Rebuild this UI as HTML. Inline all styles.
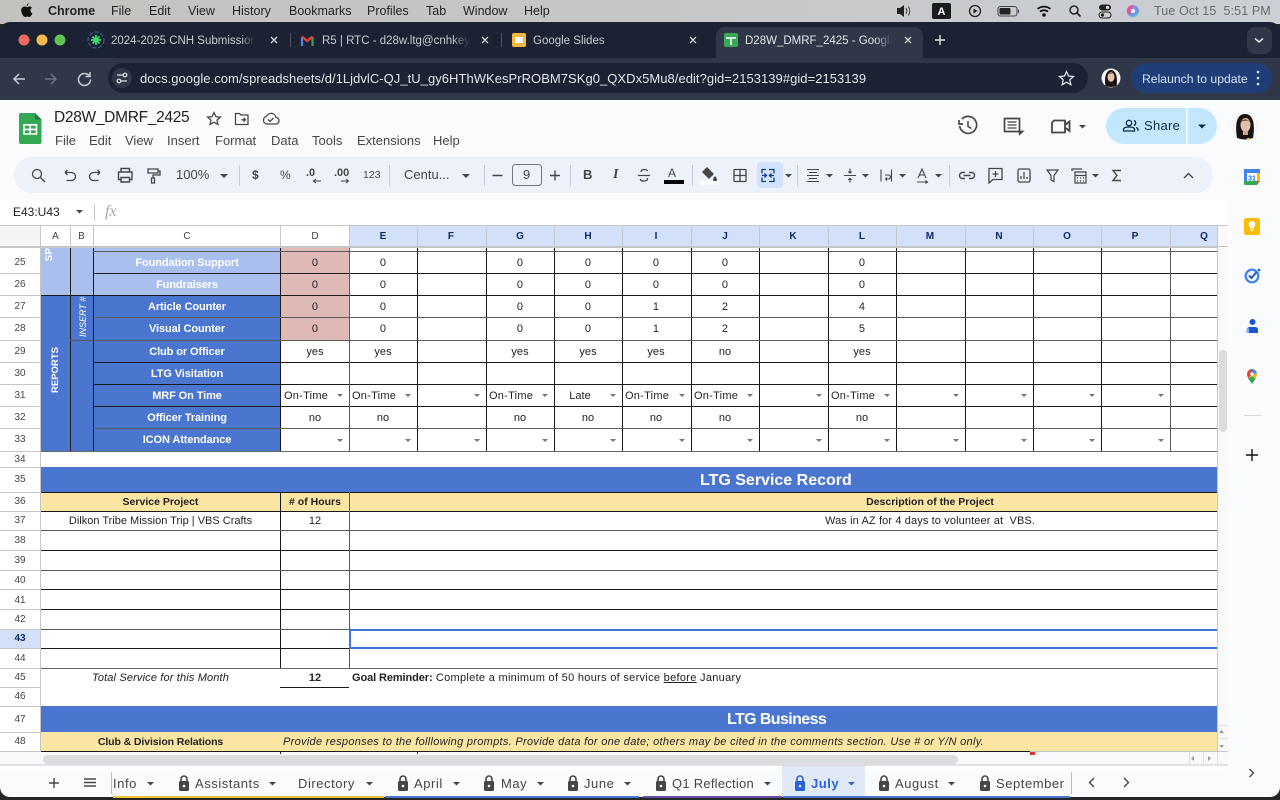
<!DOCTYPE html>
<html><head><meta charset="utf-8"><title>D28W_DMRF_2425</title>
<style>
*{box-sizing:border-box}
html,body{margin:0;padding:0;width:1280px;height:800px;overflow:hidden;background:#262626;font-family:"Liberation Sans",sans-serif}
.x,.c,.b,.h{position:absolute;white-space:nowrap;font-style:normal}
.b{display:block}
.x{line-height:16px}
.m{top:3px;font-size:12.5px;color:#222}
.tt{top:33px;font-size:11.5px;color:#c7cad1;overflow:hidden}
.mn{top:133px;font-size:13px;color:#444746}
.tb{top:167px;font-size:13px;color:#444746}
.st{top:776px;font-size:13px;letter-spacing:.55px;color:#444746}
.c{font-size:11px;color:#222;text-align:center;letter-spacing:.05px;margin-top:1px}
.w{color:#fff;font-weight:bold;letter-spacing:-.1px}
.hd{font-size:10.5px;font-weight:bold;letter-spacing:0}
.cC{left:94px;width:186px}.cD{left:281px;width:68px}.cE{left:349px;width:68px}.cF{left:417px;width:68px}.cG{left:486px;width:68px}.cH{left:554px;width:68px}.cI{left:622px;width:68px}.cJ{left:691px;width:68px}.cK{left:759px;width:68px}.cL{left:828px;width:68px}
.r25{top:251px;height:22px;line-height:22px}.r26{top:273px;height:22px;line-height:22px}.r27{top:295px;height:22px;line-height:22px}.r28{top:317px;height:23px;line-height:23px}.r29{top:340px;height:22px;line-height:22px}.r30{top:362px;height:22px;line-height:22px}.r31{top:384px;height:22px;line-height:22px}.r32{top:406px;height:22px;line-height:22px}.r33{top:428px;height:23px;line-height:23px}
.on{text-align:left;padding-left:3px;letter-spacing:.25px}
.h{left:0;width:40px;text-align:center;font-size:10px;color:#444;height:16px;line-height:16px;margin-top:1px}
.k{top:228px;height:16px;line-height:16px;font-size:10px;text-align:center;color:#0b2a66;font-weight:bold}
.k2{color:#444;font-weight:normal}
.v{position:absolute;writing-mode:vertical-rl;transform:rotate(180deg);white-space:nowrap;color:#fff;line-height:14px}
</style></head><body>
<!-- menu bar -->
<div class="b" style="left:0;top:0;width:1280px;height:24px;background:linear-gradient(90deg,#c4c2bf 0%,#c6c6c6 50%,#cbd0d6 100%)"></div>
<span class="x m" style="left:48px;font-weight:bold">Chrome</span>
<span class="x m" style="left:111px">File</span><span class="x m" style="left:149px">Edit</span><span class="x m" style="left:188px">View</span><span class="x m" style="left:232px">History</span><span class="x m" style="left:289px">Bookmarks</span><span class="x m" style="left:367px">Profiles</span><span class="x m" style="left:426px">Tab</span><span class="x m" style="left:463px">Window</span><span class="x m" style="left:524px">Help</span>
<span class="x m" style="left:1154px;color:#68696c;letter-spacing:.1px">Tue Oct 15&nbsp; 5:51 PM</span>
<!-- window -->
<div class="b" style="left:0;top:22px;width:1280px;height:775px;border-radius:10px 10px 10px 10px;background:#1b2234;overflow:hidden">
<div class="b" style="left:0;top:36px;width:1280px;height:42px;background:#2f3748"></div>
<div class="b" style="left:716px;top:5px;width:207px;height:32px;background:#2f3748;border-radius:9px 9px 0 0"></div>
<div class="b" style="left:1247px;top:5px;width:25px;height:27px;background:#2f3748;border-radius:8px"></div>
<div class="b" style="left:108px;top:41px;width:980px;height:30px;background:#1b2234;border-radius:15px"></div>
<div class="b" style="left:1131px;top:41px;width:141px;height:30px;background:#1f3e78;border-radius:15px"></div>
<div class="b" style="left:0;top:78px;width:1280px;height:697px;background:#f9fbfd"></div>
<div class="b" style="left:14px;top:135px;width:1199px;height:36px;background:#edf2fa;border-radius:18px"></div>
<div class="b" style="left:0;top:178px;width:1228px;height:570px;background:#fff"></div>
<div class="b" style="left:1106px;top:86px;width:111px;height:36px;background:#c2e7ff;border-radius:18px"></div>
<div class="b" style="left:757px;top:140px;width:26px;height:26px;background:#d3e3fd;border-radius:4px"></div>
</div>
<!-- tabs text -->
<span class="x tt" style="left:111px;width:144px;-webkit-mask-image:linear-gradient(90deg,#000 90%,transparent)">2024-2025 CNH Submission Portal</span>
<span class="x tt" style="left:322px;width:148px;-webkit-mask-image:linear-gradient(90deg,#000 88%,transparent)">R5 | RTC - d28w.ltg@cnhkeyclub.org</span>
<span class="x tt" style="left:533px;width:90px">Google Slides</span>
<span class="x tt" style="left:745px;width:147px;color:#e3e5ea;-webkit-mask-image:linear-gradient(90deg,#000 88%,transparent)">D28W_DMRF_2425 - Google Sheets</span>
<span class="x" style="left:140px;top:71px;font-size:13px;letter-spacing:.04px;color:#e3e5ea">docs.google.com/spreadsheets/d/1LjdvlC-QJ_tU_gy6HThWKesPrROBM7SKg0_QXDx5Mu8/edit?gid=2153139#gid=2153139</span>
<span class="x" style="left:1142px;top:71px;font-size:12.2px;color:#d5e3fb">Relaunch to update</span>
<!-- docs header -->
<span class="x" style="left:54px;top:109px;font-size:15.5px;line-height:18px;letter-spacing:-.3px;color:#1f1f1f">D28W_DMRF_2425</span>
<span class="x mn" style="left:55px">File</span><span class="x mn" style="left:89px">Edit</span><span class="x mn" style="left:125px">View</span><span class="x mn" style="left:167px">Insert</span><span class="x mn" style="left:215px">Format</span><span class="x mn" style="left:271px">Data</span><span class="x mn" style="left:312px">Tools</span><span class="x mn" style="left:357px">Extensions</span><span class="x mn" style="left:433px">Help</span>
<span class="x" style="left:1144px;top:118px;font-size:13px;letter-spacing:.3px;color:#0b2a4a">Share</span>
<span class="x tb" style="left:176px">100%</span>
<span class="x tb" style="left:252px;font-weight:bold;font-size:12px">$</span><span class="x tb" style="left:280px;font-size:12px">%</span>
<span class="x tb" style="left:306px;top:165px;font-size:11px;font-weight:bold">.0</span><span class="x tb" style="left:334px;top:165px;font-size:11px;font-weight:bold">.00</span>
<span class="x tb" style="left:363px;font-size:10.5px">123</span>
<span class="x tb" style="left:404px">Centu...</span>
<span class="x tb" style="left:523px">9</span>
<span class="x tb" style="left:583px;font-weight:bold;font-size:13px">B</span>
<span class="x tb" style="left:613px;font-style:italic;font-size:14px;font-family:'Liberation Serif',serif;font-weight:bold">I</span>
<span class="x tb" style="left:668px;top:165px;font-size:12px">A</span>
<span class="x" style="left:13px;top:204px;font-size:12px;color:#1f1f1f">E43:U43</span>
<span class="x" style="left:105px;top:204px;font-size:16px;font-style:italic;font-family:'Liberation Serif',serif;color:#a6a8ab">fx</span>
<!-- fills -->
<div class="b" style="left:41px;top:247px;width:52px;height:48px;background:#a9c0ee"></div>
<div class="b" style="left:93px;top:247px;width:188px;height:48px;background:#a9c0ee"></div>
<div class="b" style="left:41px;top:295px;width:240px;height:156px;background:#4a76cf"></div>
<div class="b" style="left:281px;top:247px;width:68px;height:93px;background:#deb9b6"></div>
<div class="b" style="left:41px;top:467px;width:1176px;height:25px;background:#4a76cf"></div>
<div class="b" style="left:41px;top:492px;width:1176px;height:19px;background:#fbe5a3"></div>
<div class="b" style="left:41px;top:706px;width:1176px;height:26px;background:#4a76cf"></div>
<div class="b" style="left:41px;top:732px;width:1176px;height:20px;background:#fbe5a3"></div>
<div class="b" style="left:349px;top:226px;width:868px;height:20px;background:#d3e0f9"></div>
<div class="b" style="left:0;top:226px;width:40px;height:20px;background:#f3f4f5"></div>
<div class="b" style="left:0;top:629px;width:40px;height:19px;background:#d3e0f9"></div>
<div class="b" style="left:1217px;top:226px;width:11px;height:526px;background:#fafafa"></div>
<div class="b" style="left:0;top:752px;width:1228px;height:13px;background:#f8f9fa"></div>
<div class="b" style="left:1219px;top:350px;width:8px;height:82px;background:#dadce0;border-radius:4px"></div>
<div class="b" style="left:43px;top:755px;width:915px;height:9px;background:#dadce0;border-radius:5px"></div>
<div class="b" style="left:782px;top:765px;width:83px;height:32px;background:#e1e9f7"></div>
<div class="b" style="left:113px;top:796px;width:271px;height:2px;background:#f1c232"></div>
<div class="b" style="left:385px;top:796px;width:254px;height:2px;background:#4a76cf"></div>
<div class="b" style="left:643px;top:796px;width:139px;height:2px;background:#674ea7"></div>
<div class="b" style="left:783px;top:796px;width:287px;height:2px;background:#4a76cf"></div>
<!-- grid lines and icons -->
<svg width="1280" height="800" viewBox="0 0 1280 800" style="position:absolute;left:0;top:0">
<defs>
<symbol id="lk" viewBox="0 0 12 18"><path d="M3 7V5a3 3 0 0 1 6 0v2" fill="none" stroke="#444746" stroke-width="1.6"/><rect x="1" y="7" width="10" height="10" rx="1.5" fill="#444746"/><circle cx="6" cy="12" r="1.3" fill="#f9fbfd"/></symbol>
<symbol id="lb" viewBox="0 0 12 18"><path d="M3 7V5a3 3 0 0 1 6 0v2" fill="none" stroke="#2a62d8" stroke-width="1.6"/><rect x="1" y="7" width="10" height="10" rx="1.5" fill="#2a62d8"/><circle cx="6" cy="12" r="1.3" fill="#e1e9f7"/></symbol>
</defs>
<g shape-rendering="crispEdges" fill="none">
<path stroke="#c4c7c5" d="M0 225.5H1228M0 246.5H1228M40.5 226V752M70.5 226V246M93.5 226V246M280.5 226V246M349.5 226V246M417.5 226V246M486.5 226V246M554.5 226V246M622.5 226V246M691.5 226V246M759.5 226V246M828.5 226V246M896.5 226V246M965.5 226V246M1033.5 226V246M1101.5 226V246M1170.5 226V246M0 273.5H40M0 295.5H40M0 317.5H40M0 340.5H40M0 362.5H40M0 384.5H40M0 406.5H40M0 428.5H40M0 451.5H40M0 467.5H40M0 492.5H40M0 511.5H40M0 530.5H40M0 550.5H40M0 570.5H40M0 589.5H40M0 609.5H40M0 629.5H40M0 648.5H40M0 668.5H40M0 687.5H40M0 706.5H40M0 732.5H40M0 751.5H1228M1217.5 226V752M0 765H1228"/>
<path stroke="#c4c7c5" stroke-width="2" d="M0 247H1217"/>
<path stroke="#1a1a1a" d="M93 273.5H1217M41 295.5H1217M93 362.5H1217M93 384.5H1217M93 406.5H1217M70.500 248V451M93.500 248V451M280.500 248V451M417.500 248V451M486.500 248V451M554.500 248V451M622.500 248V451M691.500 248V451M759.500 248V451M828.500 248V451M896.500 248V451M965.500 248V451M1033.500 248V451M1101.500 248V451"/>
<path stroke="#5a5a5a" d="M93 251.500H1217M93 317.500H1217M70 340.500H1217M93 428.500H1217M349.500 248V451M1170.500 248V451"/>
<path stroke="#1a1a1a" d="M41 492.500H1217M41 511.500H1217M41 550.500H1217M41 589.500H1217M41 609.500H1217M41 648.500H1217M280 687.500H349M280.500 492V668M41 751.500H1030M280.500 752V754M417.500 752V754"/>
<path stroke="#5a5a5a" d="M41 530.500H1217M41 570.500H1217M41 629.500H1217M349.500 492V668"/>
<path stroke="#666" d="M41 451.500H1217M41 668.500H1217"/>
<path d="M1217 630H350V648H1217" stroke="#3f76dc" stroke-width="2"/>
<rect x="1030" y="752" width="5" height="3" fill="#d33" stroke="none"/>
</g>
<path fill="#777" d="M337 394h6l-3 3zM405 394h6l-3 3zM474 394h6l-3 3zM542 394h6l-3 3zM610 394h6l-3 3zM679 394h6l-3 3zM747 394h6l-3 3zM816 394h6l-3 3zM884 394h6l-3 3zM953 394h6l-3 3zM1021 394h6l-3 3zM1089 394h6l-3 3zM1158 394h6l-3 3zM337 439h6l-3 3zM405 439h6l-3 3zM474 439h6l-3 3zM542 439h6l-3 3zM610 439h6l-3 3zM679 439h6l-3 3zM747 439h6l-3 3zM816 439h6l-3 3zM884 439h6l-3 3zM953 439h6l-3 3zM1021 439h6l-3 3zM1089 439h6l-3 3zM1158 439h6l-3 3z"/>
<!-- mac bar icons -->
<path fill="#111" d="M29.500 6.500c-.9 0-1.800.6-2.400.6-.7 0-1.500-.6-2.400-.6-1.700 0-3.500 1.400-3.500 4 0 3 2.300 6.500 4 6.500.7 0 1.200-.5 2-.5s1.200.5 2 .5c1.300 0 2.700-2.200 3.200-3.800-1.200-.5-2-1.500-2-2.800 0-1.200.7-2 1.600-2.600-.6-.9-1.500-1.300-2.500-1.300zM27 6c.9-.3 1.700-1.500 1.500-2.700-1 .2-2 1.300-1.800 2.700z"/>
<path fill="#222" d="M897 8h3l4-3v12l-4-3h-3z"/><path fill="none" stroke="#444" d="M906 8q1.500 3 0 6M908.500 6.500q2.500 4.500 0 9"/>
<rect x="932" y="3" width="19" height="16" rx="2" fill="#1c1c1e"/><text x="941.500" y="15" font-size="11" font-weight="bold" fill="#fff" text-anchor="middle" font-family="Liberation Sans">A</text>
<circle cx="975" cy="11" r="5.500" fill="none" stroke="#222" stroke-width="1.300"/><path fill="#222" d="M973.500 8.500l4 2.500-4 2.500z"/>
<rect x="998" y="6.500" width="19" height="9.500" rx="2.500" fill="none" stroke="#444"/><rect x="999.500" y="8" width="11" height="6.500" rx="1" fill="#222"/><rect x="1018" y="9.500" width="1" height="3.500" fill="#444"/>
<path fill="none" stroke="#111" stroke-width="1.700" d="M1037.500 9a10 10 0 0 1 13 0M1040 11.800a6 6 0 0 1 8 0"/><circle cx="1044" cy="15" r="1.800" fill="#111"/>
<circle cx="1074" cy="10" r="4" fill="none" stroke="#222" stroke-width="1.500"/><path stroke="#222" stroke-width="1.700" d="M1077 13l3.500 3.500"/>
<rect x="1099" y="4.500" width="12" height="6" rx="3" fill="#222"/><rect x="1099" y="12" width="12" height="6" rx="3" fill="none" stroke="#222"/><circle cx="1107.500" cy="7.500" r="1.600" fill="#ddd"/><circle cx="1102.500" cy="15" r="1.600" fill="#222"/>
<circle cx="1133" cy="11" r="6" fill="#7d8fe0"/><path fill="#e0569d" d="M1133 5a6 6 0 0 0-5 9.500q4-1 5-9.500z"/><path fill="#4ec9d9" d="M1139 11a6 6 0 0 1-7 6q5-3 7-6z"/><circle cx="1133" cy="11" r="2.200" fill="#e8f0ff"/>
<!-- traffic lights -->
<circle cx="24" cy="40" r="5.500" fill="#ee6a5f"/><circle cx="42" cy="40" r="5.500" fill="#f5bd4f"/><circle cx="60" cy="40" r="5.500" fill="#61c454"/>
<!-- tab favicons -->
<circle cx="96" cy="40" r="8" fill="none" stroke="#3f6aa5" stroke-dasharray="4 2"/><path stroke="#3ddc72" stroke-width="1.700" d="M96 35v10M91 40h10M92.500 36.500l7 7M99.500 36.500l-7 7"/>
<path fill="none" stroke="#4a86e8" stroke-width="2.200" d="M302 46v-9"/><path fill="none" stroke="#34a853" stroke-width="2.200" d="M312.500 46v-9"/><path fill="none" stroke="#ea4335" stroke-width="2.200" d="M302 36.500l5.200 4.500 5.300-4.500"/>
<rect x="512" y="33" width="14" height="14" rx="2" fill="#f4b93a"/><rect x="515" y="37" width="8" height="6" fill="#fff"/>
<rect x="724" y="33" width="14" height="14" rx="2" fill="#3aa757"/><path stroke="#fff" stroke-width="1.500" d="M726 38h10M731 38v7"/>
<g stroke="#dfe1e6" stroke-width="1.300" fill="none"><path d="M271 37l6 6M277 37l-6 6M482 37l6 6M488 37l-6 6M690 37l6 6M696 37l-6 6M905 37l6 6M911 37l-6 6"/><path d="M935 40h10M940 35v10" stroke-width="1.400"/><path d="M1255 38.500l4 3.500 4-3.500" stroke-width="1.500"/></g>
<path stroke="#4c5364" d="M290.500 33v14M501.500 33v14"/>
<!-- nav -->
<g fill="none" stroke="#c8ccd4" stroke-width="1.500"><path d="M14 79h11M19 74l-5 5 5 5"/><path d="M45 79h11M51 74l5 5-5 5" stroke="#6b7280"/><path d="M89 75.500a6 6 0 1 0 1.500 4M90 72v4.500h-4.500"/></g>
<circle cx="122" cy="78" r="10" fill="#2f3748"/><g fill="none" stroke="#dfe1e6" stroke-width="1.200"><path d="M117 75h6M121 81h6"/><circle cx="125" cy="75" r="1.800"/><circle cx="119" cy="81" r="1.800"/></g>
<path fill="none" stroke="#dfe1e6" stroke-width="1.300" d="M1066.500 71.500l2 4.500 5 .5-3.700 3.300 1 4.900-4.300-2.500-4.300 2.500 1-4.900-3.700-3.300 5-.5z"/>
<circle cx="1111" cy="78" r="9.500" fill="#f7f5f3"/><path fill="#1a1412" d="M1105.500 86c-1.500-8 .5-16 5.500-16s7 8 5.500 16q-5.500 2-11 0z"/><ellipse cx="1111" cy="77" rx="3.500" ry="4.800" fill="#e6c4ae"/><path fill="#1a1412" d="M1107.500 75q3.500-4 7 0-2-2-3.500-1.500-2 0-3.500 1.500z"/>
<circle cx="1258" cy="72" r="1.300" fill="#dfe8fb"/><circle cx="1258" cy="78" r="1.300" fill="#dfe8fb"/><circle cx="1258" cy="84" r="1.300" fill="#dfe8fb"/>
<!-- sheets logo -->
<path fill="#34a853" d="M21 113h14l6.500 6.500V142a2 2 0 0 1-2 2H21a2 2 0 0 1-2-2v-27a2 2 0 0 1 2-2z"/><path fill="#1e7d3e" d="M35 113l6.500 6.500H35z"/><path fill="none" stroke="#fff" stroke-width="1.600" d="M24 124.800h12.500v9.200H24zM24 129.400h12.500M30.200 124.800v9.200"/>
<g fill="none" stroke="#444746" stroke-width="1.300">
<path d="M214 112.500l1.900 4.100 4.500.5-3.400 3 1 4.400-4-2.300-4 2.300 1-4.400-3.400-3 4.500-.5z"/>
<path d="M235.500 113.500h4l1.500 1.500h7v9.500h-12.500zM241.500 119.800h3.500M243.500 117.800l2 2-2 2"/>
<path d="M266.500 124h9a3.300 3.300 0 0 0 .5-6.600 5 5 0 0 0-9.500-1 3.900 3.900 0 0 0 0 7.600zM268 119.500l2 2 3.500-3.500"/>
</g>
<!-- top right -->
<g fill="none" stroke="#444746" stroke-width="1.800">
<path d="M962 119a8.500 8.500 0 1 1-2.300 7M959 120v4h4" stroke-width="1.700"/><path d="M968 121v5.500l3.500 2" stroke-width="1.500"/>
<path d="M1004.500 118.500h15v13h3l-2.800 2.500-.200-2.500h-15z" stroke-width="1.700"/><path d="M1007.500 122h9M1007.500 125h9M1007.500 128h9" stroke-width="1.200"/>
<path d="M1054 120.500h11v12h-13v-10zM1065 125l4.500-3.500v9.500l-4.500-3.500" stroke-width="1.800"/>
</g>
<path fill="#444746" d="M1079 125h7l-3.500 3.500z"/>
<g fill="none" stroke="#0b2a4a" stroke-width="1.300"><circle cx="1129" cy="123" r="2.700"/><path d="M1123.500 131v-1.500q0-2.500 5.500-2.500t5.500 2.500v1.500zM1134 120.500a2.700 2.700 0 0 1 0 5M1136 127.500q2 .5 2 2.500v1"/></g>
<path stroke="#f9fbfd" stroke-width="1.500" d="M1187 108v36"/><path fill="#0b2a4a" d="M1198 124.500h8l-4 4z"/>
<circle cx="1245" cy="126" r="14" fill="#f7f5f3"/><path fill="#17110f" d="M1237 138c-2-12-1-24 8-24s10 12 8 24q-8 3-16 0z"/><ellipse cx="1245.500" cy="125" rx="5" ry="7" fill="#e3bfa8"/><path fill="#17110f" d="M1240 123q5-7 11 0-3-3-5.500-2.500-3.500 0-5.500 2.500z"/><path fill="#caa58e" d="M1243 131h5v4h-5z"/><path fill="#e9c53f" d="M1247 138h3v2h-3z"/>
<!-- toolbar -->
<g fill="none" stroke="#444746" stroke-width="1.300">
<circle cx="37" cy="174" r="4.500"/><path d="M40.500 177.500l4.500 4.500"/>
<path d="M66 171.500h6.500a4 4 0 0 1 0 8h-5M66 171.500l2.500-2.500M66 171.500l2.500 2.500" transform="translate(-1 1)"/>
<path d="M101 171.500h-6.500a4 4 0 0 0 0 8h5M101 171.500l-2.500-2.500M101 171.500l-2.500 2.500" transform="translate(-1 1)"/>
<path d="M121 172v-3.500h8.500v3.500M121 179.500h-2.500V172h13.500v7.500h-2.500M121 177.500h8.500v4.500h-8.500z" stroke-width="1.400"/>
<path d="M148 169h10v4h-10zM158 171h2v4h-7v3M151.500 178h3v5h-3z" stroke-width="1.300"/>
<path d="M313 181h8M316 179l-2.500 2 2.500 2M341 181h8M346 179l2.500 2-2.500 2" stroke-width="1.100"/>
<path d="M492.500 175.500h10M550 175.500h10M555 170.500v10" stroke-width="1.400"/>
<path d="M638 175.500h12M641 172q0-2.500 3-2.500t3.500 1.500M647.500 178q.5 3-3.500 3t-3.500-2" stroke-width="1.300"/>
<rect x="734" y="169.500" width="12" height="12" rx="1"/><path d="M740 169.500v12M734 175.500h12"/>
<path d="M766 169.500h-4v4M766 181.500h-4v-4M769 169.500h5v4M769 181.500h5v-4M762 175.500h4M764.500 173.500l2 2-2 2M774 175.500h-4M771.500 173.500l-2 2 2 2" stroke="#0b3d91" stroke-width="1.300"/>
<path d="M807 169.500h12M809 172.500h8M807 175.500h12M809 178.500h8M807 181.500h12" stroke-width="1.100"/>
<path d="M844 175.500h12M850 168.500v4.500M850 178v4.500" stroke-width="1.100"/><path d="M848 171.500l2 2 2-2M848 180l2-2 2 2" fill="#444746" stroke-width=".6"/>
<path d="M881 169.500v12M891.500 169.500v12M885 175h3.500a2 2 0 0 1 0 4H886M887 177.500l-1.500 1.500 1.500 1.500" stroke-width="1.100"/>
<path d="M918 178l4-9 4 9M919.500 175h5M917 182h10M925.500 180.500l2 1.500-2 1.500" stroke-width="1.100"/>
<path d="M965 172.500h-2.500a3 3 0 0 0 0 6h2.500M969 172.500h2.500a3 3 0 0 1 0 6H969M963.500 175.500h7" stroke-width="1.400"/>
<path d="M989 168.500h13v11h-9l-4 3.500zM995.500 171v6M992.500 174h6" stroke-width="1.300"/>
<rect x="1018" y="169" width="12" height="13" rx="1.500"/><path d="M1021 179v-3M1024 179v-7M1027 179v-2" stroke-width="1.300"/>
<path d="M1047 170h11l-4 5.500v6l-3-1.500v-4.500z" stroke-width="1.200"/>
<path d="M1072 171v-2h10M1075 172h11v11h-11zM1075 175.500h11" stroke-width="1.200"/><path d="M1077 178h1M1080 178h1M1083 178h1M1077 181h1M1080 181h1M1083 181h1" stroke-width="1.300"/>
<path d="M1121 170.500h-8l4 5-4 5h8" stroke-width="1.400"/>
<path d="M1184 178l4.500-4.500 4.500 4.500" stroke-width="1.400"/>
</g>
<path fill="#444746" d="M220 174h8l-4 4zM462 174h8l-4 4zM785 174h7l-3.500 3.500zM826 174h7l-3.500 3.500zM862 174h7l-3.500 3.500zM899 174h7l-3.500 3.500zM935 174h7l-3.500 3.500zM1092 174h7l-3.500 3.500z"/>
<rect x="664" y="180" width="20" height="4" fill="#000"/>
<path fill="#444746" d="M702 172l5-5 7 7-5 5-7-7zM715 176q2 2.500 2 3.500a2 2 0 0 1-4 0q0-1 2-3.500z"/><rect x="700" y="181" width="20" height="3.500" fill="#fff"/>
<rect x="512.500" y="164.500" width="29" height="21" rx="3" fill="none" stroke="#747775"/>
<path stroke="#c7ccd6" d="M239.500 165v21M389.500 165v21M484.500 165v21M570.500 165v21M692.500 165v21M797.500 165v21M949.500 165v21"/>
<!-- fx -->
<path fill="#444746" d="M76 210h7l-3.500 3.500z"/><path stroke="#c7c7c7" d="M94.500 204v17"/>
<!-- side panel -->
<rect x="1244" y="169" width="16" height="16" rx="1.500" fill="#fff"/><path fill="#4285f4" d="M1244 169h16v4h-16z"/><path fill="#4285f4" d="M1244 173h3v8h-3z"/><path fill="#fbbc04" d="M1257 173h3v8h-3z"/><path fill="#34a853" d="M1244 181h13v4h-11.500a1.500 1.500 0 0 1-1.500-1.500z"/><path fill="#ea4335" d="M1257 181h3l-3 4z"/>
<text x="1252" y="180.500" font-size="7" font-weight="bold" fill="#1a73e8" text-anchor="middle" font-family="Liberation Sans">31</text>
<rect x="1244" y="218" width="16" height="17" rx="2" fill="#fbbc04"/><path fill="#fff" d="M1252 221a3.200 3.200 0 0 1 2 5.800v1.700h-4v-1.700a3.200 3.200 0 0 1 2-5.800zM1250.500 229.500h3v1.500h-3z"/>
<circle cx="1252" cy="276" r="6.300" fill="none" stroke="#4285f4" stroke-width="2.300"/><path fill="none" stroke="#1a56d0" stroke-width="2" d="M1249 275.500l2.500 2.500 5-6"/><circle cx="1259" cy="270" r="1.300" fill="#1a56d0"/>
<circle cx="1252.500" cy="322" r="3" fill="#1a56d0"/><path fill="#1a56d0" d="M1247 333v-3q0-3 3-3h5q3 0 3 3v3z"/><path fill="#8ab4f8" d="M1246 330q0 2 1 3h2v-5z"/>
<path fill="#34a853" d="M1252 384l-3.800-5.500 3.800-2.500 3.800 2.500z"/><path fill="#ea4335" d="M1247 374a5 5 0 0 1 5-5v3.500l-4 3z"/><path fill="#4285f4" d="M1252 369a5 5 0 0 1 5 5l-3 2-2-3.500z"/><path fill="#fbbc04" d="M1257 374q0 2-2 4.500l-3-2.500 3.500-3z"/><path fill="#ea4335" d="M1247 374q0 2 1.200 4.500l3-3-2-2.500z"/><circle cx="1252" cy="374" r="1.700" fill="#fff"/>
<path stroke="#d5d7da" d="M1244 415.500h17"/>
<path stroke="#111" stroke-width="1.400" d="M1252 449v12M1246 455h12"/>
<path fill="none" stroke="#444746" stroke-width="1.300" d="M1249.500 769l4 4-4 4"/>
<!-- scroll arrows -->
<path fill="#999" d="M1219 733h5l-2.500-3zM1219 745h5l-2.500 3zM1194 761v-5l-3 2.500zM1208 761v-5l3 2.500z"/>
<path stroke="#e0e0e0" d="M1217 725.500h11M1217 738.500h11M1189.500 752v13M1203.500 752v13M1217.500 752v13"/>
<!-- sheet tabs -->
<g fill="none" stroke="#444746" stroke-width="1.400"><path d="M49 783h10M54 778v10M84 779h12M84 782.500h12M84 786h12"/><path d="M1094 778l-4.500 4.500 4.500 4.500M1124 778l4.500 4.500-4.500 4.500"/></g>
<path stroke="#bbb" d="M111.500 772v22M1071.500 772v22"/>
<path fill="#444746" d="M147 782h7l-3.500 3.500zM269 782h7l-3.500 3.500zM366 782h7l-3.500 3.500zM453 782h7l-3.500 3.500zM537 782h7l-3.500 3.500zM624 782h7l-3.500 3.500zM764 782h7l-3.500 3.500zM948 782h7l-3.500 3.500z"/>
<path fill="#2a62d8" d="M848 782h7l-3.500 3.500z"/>
<use href="#lk" x="178" y="774" width="12" height="18"/><use href="#lk" x="397" y="774" width="12" height="18"/><use href="#lk" x="483" y="774" width="12" height="18"/><use href="#lk" x="567" y="774" width="12" height="18"/><use href="#lk" x="655" y="774" width="12" height="18"/><use href="#lb" x="794" y="774" width="12" height="18"/><use href="#lk" x="878" y="774" width="12" height="18"/><use href="#lk" x="979" y="774" width="12" height="18"/>
</svg>
<!-- col headers -->
<span class="c k k2" style="left:41px;width:29px">A</span><span class="c k k2" style="left:70px;width:23px">B</span><span class="c k k2" style="left:94px;width:186px">C</span><span class="c k k2" style="left:281px;width:68px">D</span>
<span class="c k" style="left:349px;width:68px">E</span><span class="c k" style="left:417px;width:68px">F</span><span class="c k" style="left:486px;width:68px">G</span><span class="c k" style="left:554px;width:68px">H</span><span class="c k" style="left:622px;width:68px">I</span><span class="c k" style="left:691px;width:68px">J</span><span class="c k" style="left:759px;width:68px">K</span><span class="c k" style="left:828px;width:68px">L</span><span class="c k" style="left:896px;width:68px">M</span><span class="c k" style="left:965px;width:68px">N</span><span class="c k" style="left:1033px;width:68px">O</span><span class="c k" style="left:1101px;width:68px">P</span><span class="c k" style="left:1170px;width:68px">Q</span>
<!-- row headers -->
<span class="h" style="top:254px">25</span><span class="h" style="top:276px">26</span><span class="h" style="top:298px">27</span><span class="h" style="top:320px">28</span><span class="h" style="top:343px">29</span><span class="h" style="top:365px">30</span><span class="h" style="top:387px">31</span><span class="h" style="top:409px">32</span><span class="h" style="top:431px">33</span><span class="h" style="top:451px">34</span><span class="h" style="top:471px">35</span><span class="h" style="top:493px">36</span><span class="h" style="top:512px">37</span><span class="h" style="top:532px">38</span><span class="h" style="top:552px">39</span><span class="h" style="top:572px">40</span><span class="h" style="top:592px">41</span><span class="h" style="top:611px">42</span><span class="h" style="top:630px;font-weight:bold;color:#0b2a66">43</span><span class="h" style="top:650px">44</span><span class="h" style="top:669px">45</span><span class="h" style="top:688px">46</span><span class="h" style="top:711px">47</span><span class="h" style="top:733px">48</span>
<!-- rotated -->
<div class="b" style="left:43px;top:248px;width:27px;height:13px;overflow:hidden"><span class="v" style="left:0;bottom:0;font-size:10px;font-weight:bold">SPECIAL</span></div>
<span class="v" style="left:49px;top:350px;height:43px;font-size:9.5px;font-weight:bold;text-align:center">REPORTS</span>
<span class="v" style="left:76px;top:298px;height:39px;font-size:9px;font-style:italic;text-align:center">INSERT #</span>
<!-- row labels -->
<span class="c w cC r25">Foundation Support</span><span class="c w cC r26">Fundraisers</span><span class="c w cC r27">Article Counter</span><span class="c w cC r28">Visual Counter</span><span class="c w cC r29">Club or Officer</span><span class="c w cC r30">LTG Visitation</span><span class="c w cC r31">MRF On Time</span><span class="c w cC r32">Officer Training</span><span class="c w cC r33">ICON Attendance</span>
<!-- data -->
<span class="c cD r25">0</span><span class="c cE r25">0</span><span class="c cG r25">0</span><span class="c cH r25">0</span><span class="c cI r25">0</span><span class="c cJ r25">0</span><span class="c cL r25">0</span>
<span class="c cD r26">0</span><span class="c cE r26">0</span><span class="c cG r26">0</span><span class="c cH r26">0</span><span class="c cI r26">0</span><span class="c cJ r26">0</span><span class="c cL r26">0</span>
<span class="c cD r27">0</span><span class="c cE r27">0</span><span class="c cG r27">0</span><span class="c cH r27">0</span><span class="c cI r27">1</span><span class="c cJ r27">2</span><span class="c cL r27">4</span>
<span class="c cD r28">0</span><span class="c cE r28">0</span><span class="c cG r28">0</span><span class="c cH r28">0</span><span class="c cI r28">1</span><span class="c cJ r28">2</span><span class="c cL r28">5</span>
<span class="c cD r29">yes</span><span class="c cE r29">yes</span><span class="c cG r29">yes</span><span class="c cH r29">yes</span><span class="c cI r29">yes</span><span class="c cJ r29">no</span><span class="c cL r29">yes</span>
<span class="c on cD r31">On-Time</span><span class="c on cE r31">On-Time</span><span class="c on cG r31">On-Time</span><span class="c cH r31" style="padding-right:16px">Late</span><span class="c on cI r31">On-Time</span><span class="c on cJ r31">On-Time</span><span class="c on cL r31">On-Time</span>
<span class="c cD r32">no</span><span class="c cE r32">no</span><span class="c cG r32">no</span><span class="c cH r32">no</span><span class="c cI r32">no</span><span class="c cJ r32">no</span><span class="c cL r32">no</span>
<!-- lower -->
<span class="c w" style="left:700px;top:467px;line-height:25px;font-size:16px;letter-spacing:0">LTG Service Record</span>
<span class="c hd" style="left:41px;width:239px;top:492px;line-height:19px">Service Project</span>
<span class="c hd" style="left:281px;width:68px;top:492px;line-height:19px">#&nbsp;of Hours</span>
<span class="c hd" style="left:643px;width:574px;top:492px;line-height:19px">Description of the Project</span>
<span class="c" style="left:41px;width:239px;top:511px;line-height:19px;letter-spacing:0">Dilkon Tribe Mission Trip | VBS Crafts</span>
<span class="c" style="left:281px;width:68px;top:511px;line-height:19px">12</span>
<span class="c" style="left:643px;width:574px;top:511px;line-height:19px;letter-spacing:.12px">Was in AZ for 4 days to volunteer at&nbsp; VBS.</span>
<span class="c" style="left:41px;width:239px;top:668px;line-height:19px;font-style:italic;letter-spacing:.15px">Total Service for this Month</span>
<span class="c" style="left:281px;width:68px;top:668px;line-height:19px;font-weight:bold">12</span>
<span class="c" style="left:352px;top:668px;line-height:19px;text-align:left;letter-spacing:.3px"><b style="letter-spacing:-.1px">Goal Reminder:</b> Complete a minimum of 50 hours of service <u>before</u> January</span>
<span class="c w" style="left:727px;top:706px;line-height:26px;font-size:16px;letter-spacing:-.6px">LTG Business</span>
<span class="c hd" style="left:41px;width:239px;top:732px;line-height:19px;letter-spacing:-.1px">Club &amp; Division Relations</span>
<span class="c" style="left:283px;top:732px;line-height:19px;font-style:italic;text-align:left;letter-spacing:.3px">Provide responses to the folllowing prompts. Provide data for one date; others may be cited in the comments section. Use # or Y/N only.</span>
<!-- sheet tabs text -->
<span class="x st" style="left:113px">Info</span><span class="x st" style="left:195px">Assistants</span><span class="x st" style="left:298px">Directory</span><span class="x st" style="left:414px">April</span><span class="x st" style="left:501px">May</span><span class="x st" style="left:584px">June</span><span class="x st" style="left:672px;letter-spacing:.25px">Q1 Reflection</span><span class="x st" style="left:811px;color:#2a62d8;font-weight:bold">July</span><span class="x st" style="left:895px">August</span><span class="x st" style="left:996px">September</span>
</body></html>
